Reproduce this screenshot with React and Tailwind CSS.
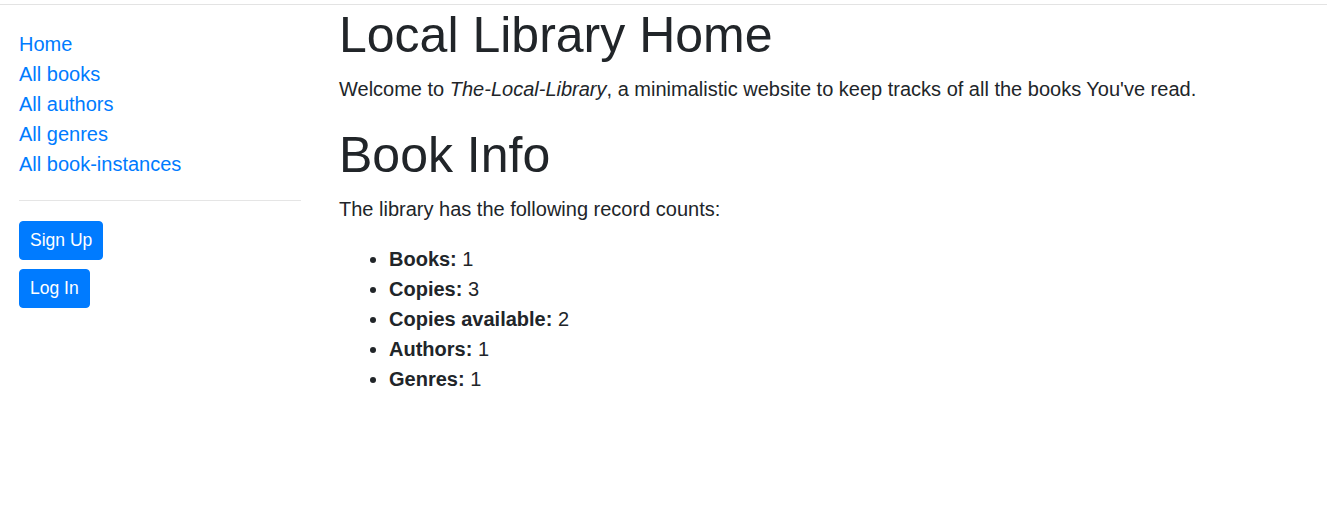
export default function App() {
  const counts = [
    { label: 'Books:', value: 1 },
    { label: 'Copies:', value: 3 },
    { label: 'Copies available:', value: 2 },
    { label: 'Authors:', value: 1 },
    { label: 'Genres:', value: 1 }
  ];
  const links = ['Home', 'All books', 'All authors', 'All genres', 'All book-instances'];

  return (
    <div className="min-h-screen bg-white font-['Liberation_Sans',Arial,sans-serif] text-[20px] leading-[30px] text-[#212529]">
      <div className="h-[4px]" />
      <div className="flex border-t border-[#e3e3e3]">
        {/* sidebar */}
        <div className="w-[320px] shrink-0 px-[19px] pt-[24px]">
          <ul className="mb-[21px]">
            {links.map((link) => (
              <li key={link}>
                <a href="#" className="text-[#007bff]">
                  {link}
                </a>
              </li>
            ))}
          </ul>
          <hr className="border-t border-[rgba(0,0,0,0.1)]" />
          <div className="mt-[20px] flex flex-col items-start gap-[9px]">
            <button className="rounded-[4px] border border-[#007bff] bg-[#007bff] px-[10px] py-[5px] text-[17.5px] leading-[27px] text-white">
              Sign Up
            </button>
            <button className="rounded-[4px] border border-[#007bff] bg-[#007bff] px-[10px] py-[5px] text-[17.5px] leading-[27px] text-white">
              Log In
            </button>
          </div>
        </div>

        {/* main */}
        <div className="flex-1 pl-[19px]">
          <h1 className="mb-[9px] text-[50px] font-normal leading-[60px]">Local Library Home</h1>
          <p className="mb-[21px]">
            Welcome to <em>The-Local-Library</em>, a minimalistic website to keep tracks of all the books
            You've read.
          </p>
          <h1 className="mb-[9px] text-[50px] font-normal leading-[60px]">Book Info</h1>
          <p className="mb-[20px]">The library has the following record counts:</p>
          <ul className="list-disc pl-[50px]">
            {counts.map(({ label, value }) => (
              <li key={label}>
                <strong className="font-bold">{label}</strong> {value}
              </li>
            ))}
          </ul>
        </div>
      </div>
    </div>
  );
}
